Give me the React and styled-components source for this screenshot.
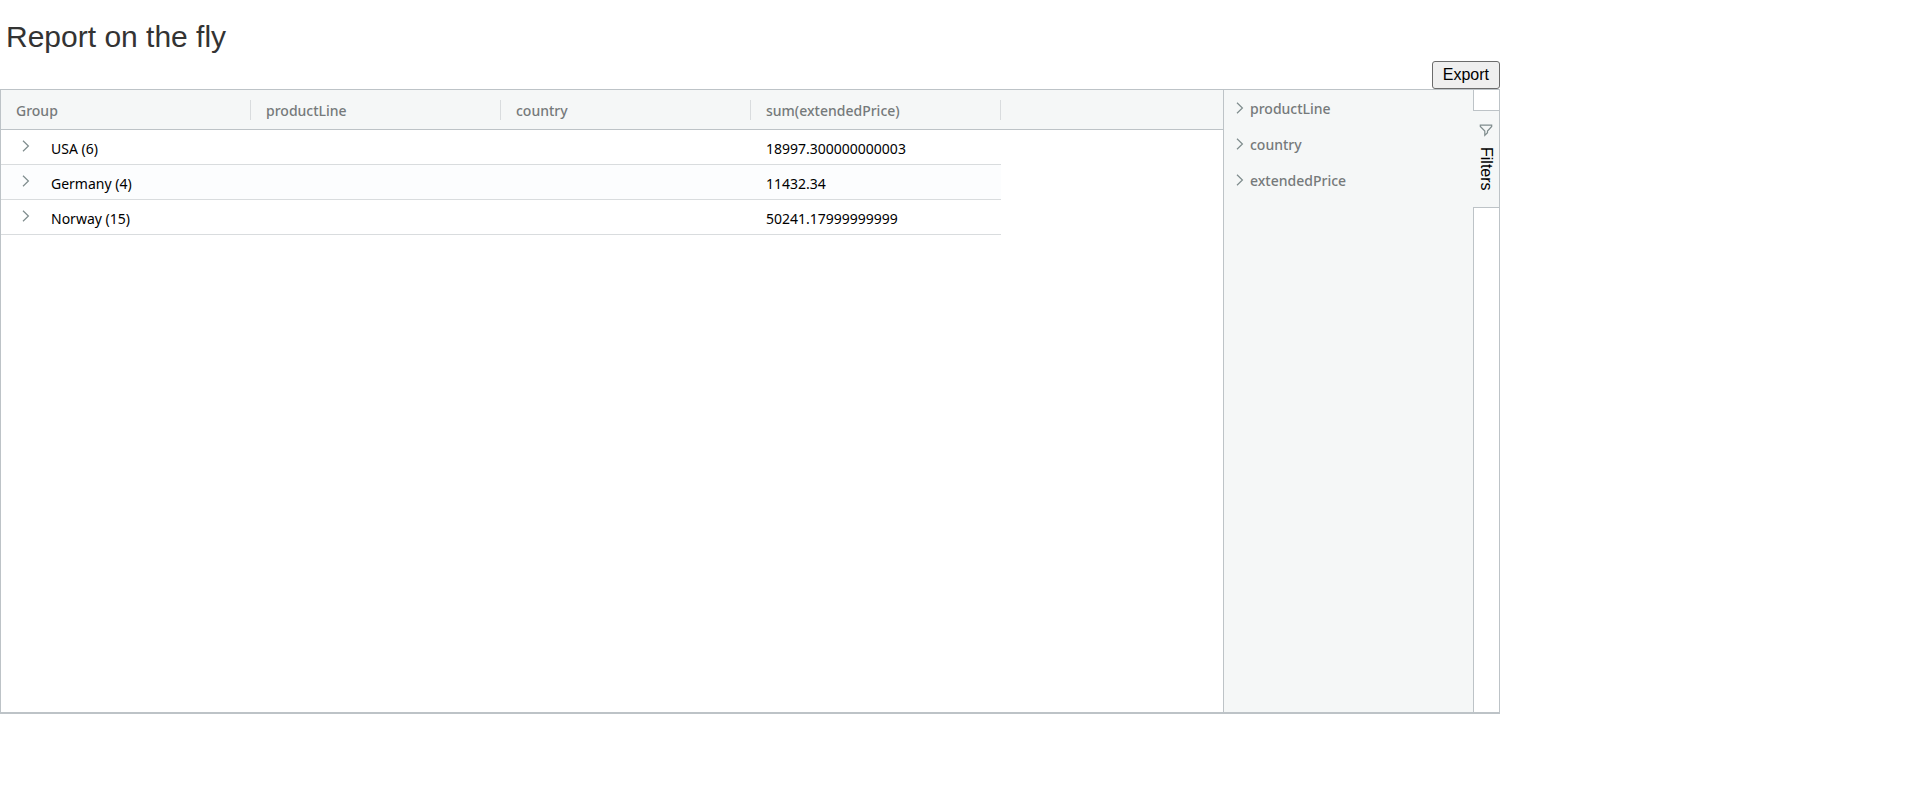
import React, { useState } from 'react'
import styled, { createGlobalStyle } from 'styled-components'

const GlobalStyle = createGlobalStyle`
  * {
    box-sizing: border-box;
  }
  body {
    margin: 0;
    background: #fff;
    color: #333;
    font-family: "Liberation Sans", Arial, sans-serif;
    font-size: 16px;
  }
`

const Page = styled.main`
  width: 100%;
  max-width: 1500px;
`

const Title = styled.h1`
  margin: 0;
  padding: 20px 6px 7px;
  font-size: 30px;
  font-weight: 400;
  line-height: 34px;
`

const Toolbar = styled.div`
  display: flex;
  justify-content: flex-end;
`

const ExportButton = styled.button`
  height: 28px;
  padding: 0 10px;
  border: 1px solid #6b6b6b;
  border-radius: 3px;
  background: #efefef;
  color: #000;
  font-family: inherit;
  font-size: 16px;
`

const Grid = styled.div`
  display: flex;
  min-height: 625px;
  border: 1px solid #bdc3c7;
  border-bottom-width: 2px;
  font-family: "Noto Sans", sans-serif;
  font-size: 14px;
`

const TableArea = styled.div`
  flex: 1;
  min-width: 0;
`

const Table = styled.table`
  width: 100%;
  table-layout: fixed;
  border-collapse: separate;
  border-spacing: 0;
`

const Col = styled.col`
  width: ${(props) => props.$width || 'auto'};
`

const HeaderCell = styled.th`
  height: 40px;
  padding: 0;
  border-bottom: 1px solid #bdc3c7;
  background: #f5f7f7;
  color: #757a7b;
  font-weight: 500;
  text-align: left;
`

const HeaderLabel = styled.div`
  display: flex;
  align-items: center;
  height: 20px;
  padding: 2px 0 0 15px;
  border-right: 1px solid #d9dcde;
`

const Row = styled.tr`
  background: ${(props) => (props.$odd ? '#fcfdfe' : '#fff')};
`

const Cell = styled.td`
  height: 35px;
  padding: 2px 15px 0;
  border-bottom: 1px solid #d9dcde;
  color: #000;
`

const EmptyCell = styled.td`
  padding: 0;
  background: #fff;
`

const GroupValue = styled.div`
  display: flex;
  align-items: center;
  gap: 19px;
`

const ExpandButton = styled.button`
  display: flex;
  padding: 0 0 4px 4px;
  border: 0;
  background: none;
`

const FilterPanel = styled.aside`
  width: 250px;
  border-left: 1px solid #bdc3c7;
  background: #f5f7f7;
`

const FilterGroup = styled.button`
  display: flex;
  align-items: center;
  gap: 4px;
  width: 100%;
  height: 36px;
  padding: 0 10px;
  border: 0;
  background: none;
  color: #757a7b;
  font-family: inherit;
  font-size: 14px;
  font-weight: 500;
`

const TabStrip = styled.div`
  display: flex;
  flex-direction: column;
  width: 26px;
  background: #f5f7f7;
`

const StripGap = styled.div`
  flex: ${(props) => (props.$fill ? '1' : '0 0 21px')};
  border-left: 1px solid #bdc3c7;
  border-${(props) => (props.$fill ? 'top' : 'bottom')}: 1px solid #bdc3c7;
  background: #fff;
`

const TabButton = styled.button`
  display: flex;
  flex-direction: column;
  align-items: center;
  gap: 10px;
  height: 96px;
  padding: 12px 0 0;
  border: 0;
  background: none;
  color: #000;
  font-family: "Liberation Sans", Arial, sans-serif;
  font-size: 16px;
`

const TabLabel = styled.span`
  writing-mode: vertical-rl;
  line-height: 18px;
`

const Chevron = () => (
  <svg width="12" height="14" viewBox="0 0 12 14" fill="none" stroke="#7f8c8d" strokeWidth="1.2" aria-hidden="true">
    <path d="M3 1.8 L8.4 7 L3 12.2" />
  </svg>
)

const FilterIcon = () => (
  <svg width="14" height="14" viewBox="0 0 14 14" fill="none" stroke="#7f8c8d" strokeWidth="1.2" aria-hidden="true">
    <path d="M1.3 2.2 H12.7 V3.4 L8.5 8 V9.7 L5.8 12.3 V8 L1.3 3.4 Z" />
  </svg>
)

const columns = ['Group', 'productLine', 'country', 'sum(extendedPrice)']

const rows = [
  { group: 'USA', count: 6, sum: '18997.300000000003' },
  { group: 'Germany', count: 4, sum: '11432.34' },
  { group: 'Norway', count: 15, sum: '50241.17999999999' },
]

const filters = ['productLine', 'country', 'extendedPrice']

const App = () => {
  const [showFilters, setShowFilters] = useState(true)

  return (
    <>
      <GlobalStyle />
      <Page>
        <Title>Report on the fly</Title>
        <Toolbar>
          <ExportButton type="button">Export</ExportButton>
        </Toolbar>
        <Grid>
          <TableArea>
            <Table>
              <colgroup>
                {columns.map((c) => (
                  <Col key={c} $width="250px" />
                ))}
                <Col />
              </colgroup>
              <thead>
                <tr>
                  {columns.map((c) => (
                    <HeaderCell key={c} scope="col">
                      <HeaderLabel>{c}</HeaderLabel>
                    </HeaderCell>
                  ))}
                  <HeaderCell as="td" />
                </tr>
              </thead>
              <tbody>
                {rows.map((r, i) => (
                  <Row key={r.group} $odd={i % 2 === 1}>
                    <Cell>
                      <GroupValue>
                        <ExpandButton type="button" aria-label={'Expand ' + r.group}>
                          <Chevron />
                        </ExpandButton>
                        <span>{r.group} ({r.count})</span>
                      </GroupValue>
                    </Cell>
                    <Cell />
                    <Cell />
                    <Cell>{r.sum}</Cell>
                    <EmptyCell />
                  </Row>
                ))}
              </tbody>
            </Table>
          </TableArea>
          {showFilters && (
            <FilterPanel>
              {filters.map((f) => (
                <FilterGroup key={f} type="button">
                  <Chevron />
                  {f}
                </FilterGroup>
              ))}
            </FilterPanel>
          )}
          <TabStrip>
            <StripGap />
            <TabButton type="button" onClick={() => setShowFilters(!showFilters)}>
              <FilterIcon />
              <TabLabel>Filters</TabLabel>
            </TabButton>
            <StripGap $fill />
          </TabStrip>
        </Grid>
      </Page>
    </>
  )
}

export default App
